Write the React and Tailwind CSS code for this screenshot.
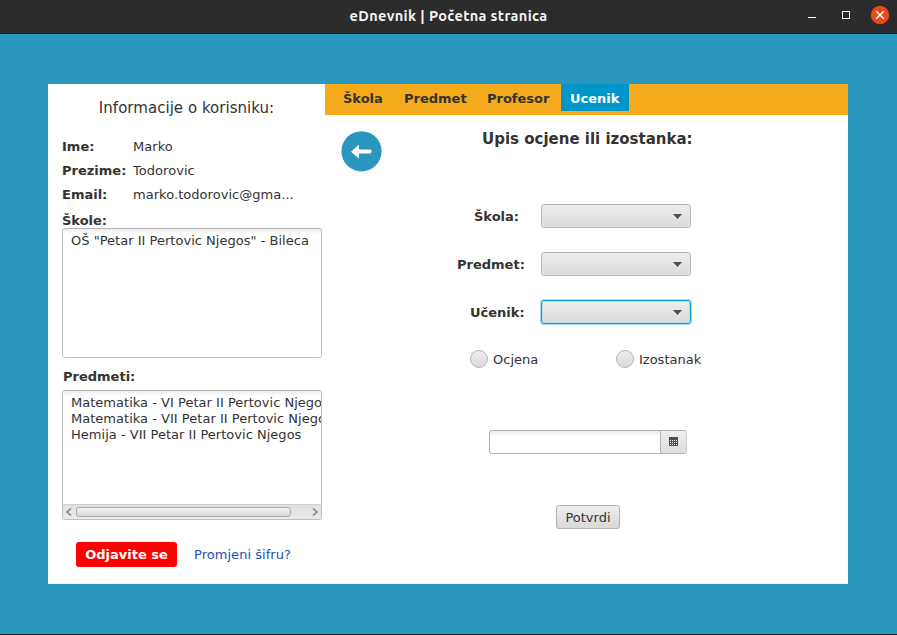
function TitleBar() {
  return (
    <header className="flex h-[34px] items-center border-b border-[#1f1f1f] bg-[#2c2c2c] text-white">
      <div className="w-[107px]" />
      <h1 className="flex-1 pb-px text-center font-['Ubuntu','Noto_Sans',sans-serif] text-[14.5px] leading-[20px] font-bold tracking-[0.35px] whitespace-nowrap text-[#f2f2f2]">
        eDnevnik | Početna stranica
      </h1>
      <div className="flex h-full w-[107px] items-start pt-[6px] pl-[18px]">
        <svg width="82" height="19" viewBox="0 0 82 19">
          <path d="M0 11.5h8" stroke="#fff" fill="none" />
          <rect x="34.5" y="5.5" width="7" height="7" stroke="#fff" fill="none" />
          <circle cx="72" cy="9" r="9.2" fill="#e34c1a" />
          <path d="M68.2 5.2l7.6 7.6M75.8 5.2l-7.6 7.6" stroke="#fff" strokeWidth="1.5" fill="none" />
        </svg>
      </div>
    </header>
  );
}

function InfoRow({ label, value }) {
  return (
    <div className="flex h-6 items-center">
      <span className="w-[71px] font-bold">{label}</span>
      <span className="tracking-[0.04px]">{value}</span>
    </div>
  );
}

function ListBox({ items, scroll }) {
  return (
    <div className="flex h-[130px] w-[260px] flex-col overflow-hidden rounded-[3px] border border-[#c0c0c0] border-t-[#b4b4b4] bg-white">
      <ul className="flex-1 bg-[linear-gradient(to_bottom,#ececec,#fff_5px)] pt-[4px] pl-2">
        {items.map((item) => (
          <li key={item} className="h-4 leading-4 tracking-[0.02px] whitespace-nowrap">{item}</li>
        ))}
      </ul>
      {scroll && (
        <div className="flex h-[15px] items-center border-t border-[#d0d0d0] bg-[linear-gradient(to_bottom,#e0e0e0,#eaeaea)]">
          <svg className="ml-[3px]" width="6" height="8" viewBox="0 0 6 8">
            <path d="M5 .5L1 4l4 3.500" stroke="#777" strokeWidth="1.300" fill="none" />
          </svg>
          <div className="ml-1 h-[10px] w-[215px] rounded-[3px] border border-[#acacac] bg-[linear-gradient(to_bottom,#f2f2f2,#d8d8d8)]" />
          <svg className="ml-[21px]" width="6" height="8" viewBox="0 0 6 8">
            <path d="M1 .5L5 4 1 7.500" stroke="#777" strokeWidth="1.300" fill="none" />
          </svg>
        </div>
      )}
    </div>
  );
}

function UserPanel() {
  return (
    <aside className="w-[277px] pl-[14px]">
      <h2 className="mt-[14px] mb-[17px] w-[249px] text-center text-[15px] leading-5 tracking-[0.03px]">Informacije o korisniku:</h2>
      <InfoRow label="Ime:" value="Marko" />
      <InfoRow label="Prezime:" value="Todorovic" />
      <InfoRow label="Email:" value="marko.todorovic@gma..." />
      <div className="mt-[6px] mb-[-1px] h-4 leading-4 font-bold">Škole:</div>
      <ListBox items={['OŠ "Petar II Pertovic Njegos" - Bileca']} />
      <div className="mt-[11px] mb-[5px] ml-px h-4 leading-4 font-bold">Predmeti:</div>
      <ListBox
        scroll
        items={[
          "Matematika - VI Petar II Pertovic Njegos",
          "Matematika - VII Petar II Pertovic Njegos",
          "Hemija - VII Petar II Pertovic Njegos",
        ]}
      />
      <div className="mt-[22px] ml-[14px] flex items-center gap-[17px]">
        <button className="h-[25px] w-[101px] rounded-[3px] bg-[#ff0000] font-bold whitespace-nowrap text-white">Odjavite se</button>
        <a className="tracking-[0.04px] whitespace-nowrap text-[#1f4fae]">Promjeni šifru?</a>
      </div>
    </aside>
  );
}

function Tabs() {
  return (
    <nav className="flex h-[31px] bg-[#f5aa1c] pl-[9px] font-bold">
      <span className="h-[27px] w-[61px] pl-[9px] leading-[30px]">Škola</span>
      <span className="h-[27px] w-[83px] pl-[9px] leading-[30px]">Predmet</span>
      <span className="h-[27px] w-[83px] pl-[9px] leading-[30px]">Profesor</span>
      <span className="h-[27px] w-[68px] bg-[#0096c9] pl-[9px] leading-[30px] text-white">Ucenik</span>
    </nav>
  );
}

function ComboRow({ label, indent, focused }) {
  return (
    <div className="flex h-6 items-center">
      <span className={"w-[84px] pt-[2px] font-bold " + indent}>{label}</span>
      <div
        className={
          "ml-[8px] flex h-6 w-[150px] items-center justify-end rounded-[3px] border bg-[linear-gradient(to_bottom,#eeeeee,#d9d9d9)] pr-2 " +
          (focused
            ? "border-[#039ed3] shadow-[0_0_0_1px_#a8dcee,inset_0_0_0_1px_#b9dfec]"
            : "border-[#b2b2b2] shadow-[inset_0_0_0_1px_#f1f1f180]")
        }
      >
        <svg width="9" height="5" viewBox="0 0 9 5">
          <path d="M0 0h9L4.500 5z" fill="#505050" />
        </svg>
      </div>
    </div>
  );
}

function Radio({ label }) {
  return (
    <label className="flex h-[18px] w-[146px] items-center gap-[5px]">
      <span className="size-[18px] rounded-full border border-[#b5b5b5] bg-[linear-gradient(to_bottom,#ededed,#dadada)]" />
      <span className="pt-[2px]">{label}</span>
    </label>
  );
}

function CalendarIcon() {
  return (
    <svg className="mb-px" width="9" height="9" viewBox="0 0 9 9" shapeRendering="crispEdges">
      <rect width="9" height="9" fill="#505050" />
      <path d="M1 3.500h7M1 5.500h7M1 7.500h7" stroke="#f4f4f4" strokeDasharray="1 1" />
    </svg>
  );
}

function EntryForm() {
  return (
    <main className="w-[523px]">
      <Tabs />
      <div className="flex pt-[16px] pl-[16px]">
        <svg width="41" height="41" viewBox="0 0 41 41">
          <circle cx="20.500" cy="20.300" r="20.100" fill="#2a98be" />
          <path d="M10 20.700L17.300 14.200Q18 13.700 18 14.500V18.600H29Q30.800 18.600 30.600 20.200L30.300 21.300Q29.900 22.600 28.500 22.600H18V26.800Q18 27.700 17.300 27.100Z" fill="#fff" />
        </svg>
        <h2 className="mt-[-2px] ml-[100px] h-5 text-[15px] leading-5 font-bold whitespace-nowrap">Upis ocjene ili izostanka:</h2>
      </div>
      <div className="mt-[32px] ml-[124px] flex flex-col gap-6">
        <ComboRow label="Škola:" indent="pl-[25px]" />
        <ComboRow label="Predmet:" indent="pl-[8px]" />
        <ComboRow label="Učenik:" indent="pl-[21px]" focused />
      </div>
      <div className="mt-[26px] ml-[145px] flex">
        <Radio label="Ocjena" />
        <Radio label="Izostanak" />
      </div>
      <div className="mt-[62px] ml-[164px] flex h-6 w-[198px] overflow-hidden rounded-[3px] border border-[#b2b2b2] border-r-[#cccccc]">
        <div className="w-[171px] border-r border-[#b2b2b2] bg-[linear-gradient(to_bottom,#ececec,#fff_5px)]" />
        <div className="flex flex-1 items-center justify-center bg-[linear-gradient(to_bottom,#eeeeee,#dddddd)]">
          <CalendarIcon />
        </div>
      </div>
      <button className="mt-[51px] ml-[231px] h-6 w-16 rounded-[3px] border border-[#b2b2b2] bg-[linear-gradient(to_bottom,#eeeeee,#d9d9d9)] pt-[2px]">
        Potvrdi
      </button>
    </main>
  );
}

export default function App() {
  return (
    <div className="flex h-[635px] w-[897px] flex-col overflow-hidden border-b border-[#222] bg-[#2a98be] font-['DejaVu_Sans',sans-serif] text-[13px] leading-4 text-[#333]">
      <TitleBar />
      <div className="mt-[50px] ml-12 flex h-[500px] w-[800px] bg-white">
        <UserPanel />
        <EntryForm />
      </div>
    </div>
  );
}
